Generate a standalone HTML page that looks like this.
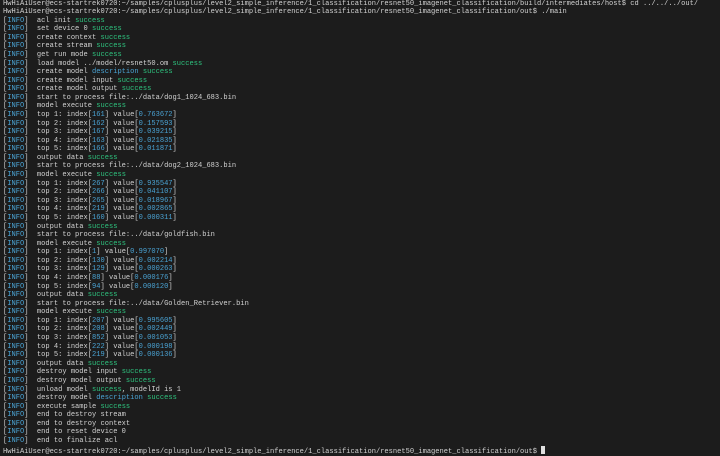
<!DOCTYPE html>
<html><head><meta charset="utf-8"><style>
html,body{margin:0;padding:0;background:#1c1c1c;width:720px;height:456px;overflow:hidden}
pre{margin:0;padding:0 0 0 3px;font-family:"Liberation Mono",monospace;font-size:7.07px;line-height:8.58px;color:#d2d2d2;white-space:pre;position:relative;top:-0.5px}
.i{color:#4aa3d4}.s{color:#2ec27e}.b{color:#4aa3d4}.c{display:inline-block;width:4px;height:8px;background:#e0e0e0;vertical-align:-1px}
</style></head><body><pre>HwHiAiUser@ecs-startrek0720:~/samples/cplusplus/level2_simple_inference/1_classification/resnet50_imagenet_classification/build/intermediates/host$ cd ../../../out/
HwHiAiUser@ecs-startrek0720:~/samples/cplusplus/level2_simple_inference/1_classification/resnet50_imagenet_classification/out$ ./main
[<span class="i">INFO</span>]  acl init <span class="s">success</span>
[<span class="i">INFO</span>]  set device 0 <span class="s">success</span>
[<span class="i">INFO</span>]  create context <span class="s">success</span>
[<span class="i">INFO</span>]  create stream <span class="s">success</span>
[<span class="i">INFO</span>]  get run mode <span class="s">success</span>
[<span class="i">INFO</span>]  load model ../model/resnet50.om <span class="s">success</span>
[<span class="i">INFO</span>]  create model <span class="b">description</span> <span class="s">success</span>
[<span class="i">INFO</span>]  create model input <span class="s">success</span>
[<span class="i">INFO</span>]  create model output <span class="s">success</span>
[<span class="i">INFO</span>]  start to process file:../data/dog1_1024_683.bin
[<span class="i">INFO</span>]  model execute <span class="s">success</span>
[<span class="i">INFO</span>]  top 1: index[<span class="b">161</span>] value[<span class="b">0.763672</span>]
[<span class="i">INFO</span>]  top 2: index[<span class="b">162</span>] value[<span class="b">0.157593</span>]
[<span class="i">INFO</span>]  top 3: index[<span class="b">167</span>] value[<span class="b">0.039215</span>]
[<span class="i">INFO</span>]  top 4: index[<span class="b">163</span>] value[<span class="b">0.021835</span>]
[<span class="i">INFO</span>]  top 5: index[<span class="b">166</span>] value[<span class="b">0.011871</span>]
[<span class="i">INFO</span>]  output data <span class="s">success</span>
[<span class="i">INFO</span>]  start to process file:../data/dog2_1024_683.bin
[<span class="i">INFO</span>]  model execute <span class="s">success</span>
[<span class="i">INFO</span>]  top 1: index[<span class="b">267</span>] value[<span class="b">0.935547</span>]
[<span class="i">INFO</span>]  top 2: index[<span class="b">266</span>] value[<span class="b">0.041107</span>]
[<span class="i">INFO</span>]  top 3: index[<span class="b">265</span>] value[<span class="b">0.018967</span>]
[<span class="i">INFO</span>]  top 4: index[<span class="b">219</span>] value[<span class="b">0.002865</span>]
[<span class="i">INFO</span>]  top 5: index[<span class="b">160</span>] value[<span class="b">0.000311</span>]
[<span class="i">INFO</span>]  output data <span class="s">success</span>
[<span class="i">INFO</span>]  start to process file:../data/goldfish.bin
[<span class="i">INFO</span>]  model execute <span class="s">success</span>
[<span class="i">INFO</span>]  top 1: index[<span class="b">1</span>] value[<span class="b">0.997070</span>]
[<span class="i">INFO</span>]  top 2: index[<span class="b">130</span>] value[<span class="b">0.002214</span>]
[<span class="i">INFO</span>]  top 3: index[<span class="b">129</span>] value[<span class="b">0.000263</span>]
[<span class="i">INFO</span>]  top 4: index[<span class="b">88</span>] value[<span class="b">0.000176</span>]
[<span class="i">INFO</span>]  top 5: index[<span class="b">94</span>] value[<span class="b">0.000120</span>]
[<span class="i">INFO</span>]  output data <span class="s">success</span>
[<span class="i">INFO</span>]  start to process file:../data/Golden_Retriever.bin
[<span class="i">INFO</span>]  model execute <span class="s">success</span>
[<span class="i">INFO</span>]  top 1: index[<span class="b">207</span>] value[<span class="b">0.995605</span>]
[<span class="i">INFO</span>]  top 2: index[<span class="b">208</span>] value[<span class="b">0.002449</span>]
[<span class="i">INFO</span>]  top 3: index[<span class="b">852</span>] value[<span class="b">0.001053</span>]
[<span class="i">INFO</span>]  top 4: index[<span class="b">222</span>] value[<span class="b">0.000198</span>]
[<span class="i">INFO</span>]  top 5: index[<span class="b">219</span>] value[<span class="b">0.000136</span>]
[<span class="i">INFO</span>]  output data <span class="s">success</span>
[<span class="i">INFO</span>]  destroy model input <span class="s">success</span>
[<span class="i">INFO</span>]  destroy model output <span class="s">success</span>
[<span class="i">INFO</span>]  unload model <span class="s">success</span>, modelId is 1
[<span class="i">INFO</span>]  destroy model <span class="b">description</span> <span class="s">success</span>
[<span class="i">INFO</span>]  execute sample <span class="s">success</span>
[<span class="i">INFO</span>]  end to destroy stream
[<span class="i">INFO</span>]  end to destroy context
[<span class="i">INFO</span>]  end to reset device 0
[<span class="i">INFO</span>]  end to finalize acl
HwHiAiUser@ecs-startrek0720:~/samples/cplusplus/level2_simple_inference/1_classification/resnet50_imagenet_classification/out$ <span class="c"></span></pre></body></html>
